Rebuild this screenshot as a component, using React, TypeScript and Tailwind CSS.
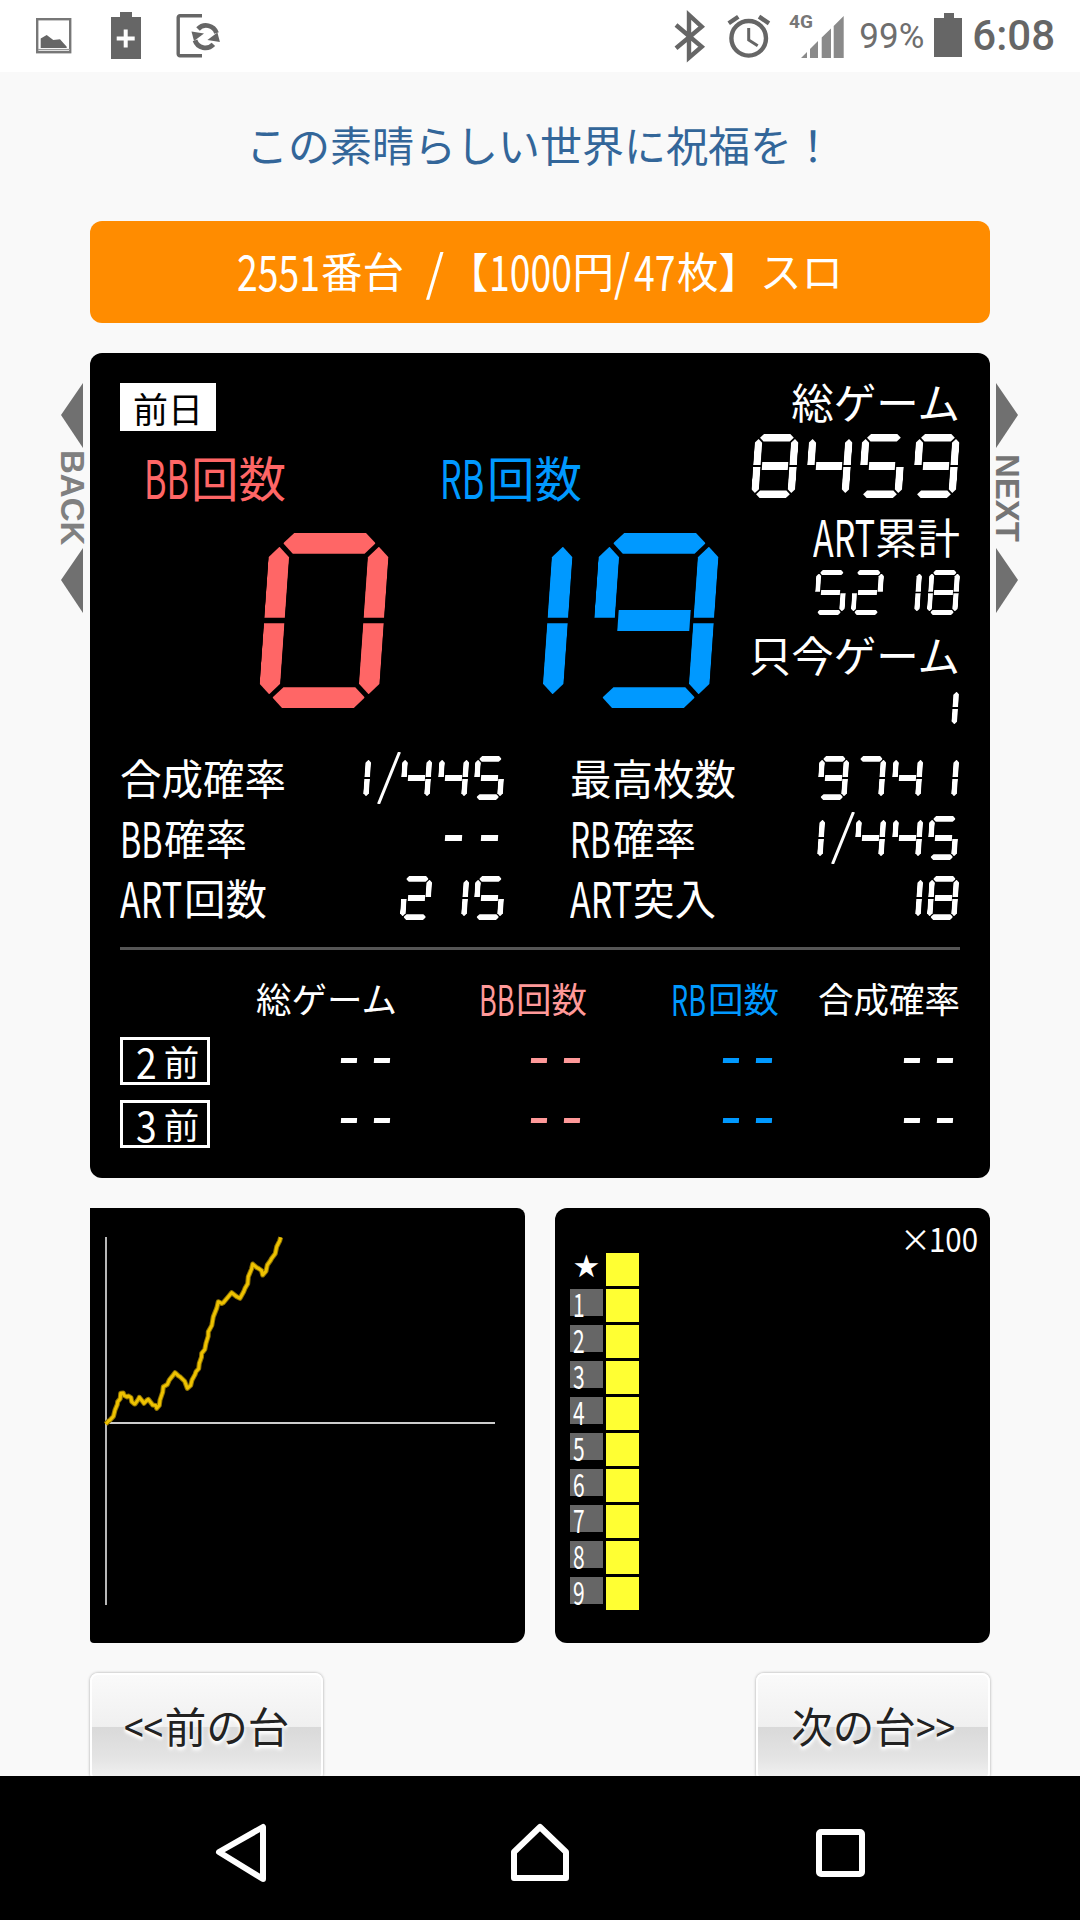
import React from "react";

const FONT = "font-['Noto_Sans_CJK_JP',sans-serif]";

const SEGS: Record<string, string> = {
  "0": "abcdef",
  "1": "bc",
  "2": "abged",
  "3": "abgcd",
  "4": "fgbc",
  "5": "afgcd",
  "6": "afgcde",
  "7": "abc",
  "8": "abcdefg",
  "9": "abcdfg",
  "-": "g",
};

/* Latin in the reference is a tall condensed face: squeeze the installed one. */
function N({ children, w, sx = 0.9, sy = 1.18 }: { children: React.ReactNode; w: number; sx?: number; sy?: number }) {
  return (
    <span className="inline-block" style={{ width: w }}>
      <span className="inline-block whitespace-pre leading-none origin-[0_50%]" style={{ transform: `scale(${sx},${sy})` }}>
        {children}
      </span>
    </span>
  );
}

function Digit({ ch, h, color, t: tt }: { ch: string; h: number; color: string; t?: number }) {
  const t = tt ?? h * 0.118;
  const w = h * 0.686;
  const g = h * 0.02;
  const c = t / 2;
  const a = (h - 3 * t) / 2;
  const on = SEGS[ch] ?? "";
  const hex = `polygon(${c}px 0, calc(100% - ${c}px) 0, 100% 50%, calc(100% - ${c}px) 100%, ${c}px 100%, 0 50%)`;
  const up = `polygon(50% 0, 100% ${c}px, 100% 100%, 0 100%, 0 ${c}px)`;
  const down = `polygon(0 0, 100% 0, 100% calc(100% - ${c}px), 50% 100%, 0 calc(100% - ${c}px))`;
  const seg = (k: string, style: React.CSSProperties) =>
    on.includes(k) ? <div key={k} style={{ backgroundColor: color, ...style }} /> : null;
  return (
    <div className="flex justify-end shrink-0" style={{ width: h * 0.836, height: h, paddingRight: h * 0.035 }}>
      <div
        className="grid -skew-x-[4deg]"
        style={{ width: w, height: h, gridTemplateColumns: `${t}px 1fr ${t}px`, gridTemplateRows: `${t}px ${a}px ${c}px ${c}px ${a}px ${t}px` }}
      >
        {seg("a", { gridColumn: "1/4", gridRow: "1", margin: `0 ${c + g}px`, clipPath: hex })}
        {seg("d", { gridColumn: "1/4", gridRow: "6", margin: `0 ${c + g}px`, clipPath: hex })}
        {seg("g", { gridColumn: "2", gridRow: "3/5", margin: `0 ${g}px` })}
        {seg("f", { gridColumn: "1", gridRow: "1/4", marginTop: c + g, marginBottom: g * 0.8, clipPath: up })}
        {seg("b", { gridColumn: "3", gridRow: "1/4", marginTop: c + g, marginBottom: g * 0.8, clipPath: up })}
        {seg("e", { gridColumn: "1", gridRow: "4/7", marginBottom: c + g, marginTop: g * 0.8, clipPath: down })}
        {seg("c", { gridColumn: "3", gridRow: "4/7", marginBottom: c + g, marginTop: g * 0.8, clipPath: down })}
      </div>
    </div>
  );
}

/* Segment read-out: lit segments are CSS shapes, the value stays as real text in the same box. */
function Seg({ value, h, color = "#ffffff", t }: { value: string; h: number; color?: string; t?: number }) {
  return (
    <div className="relative flex justify-end items-center">
      <span className="absolute inset-0 flex items-center justify-end leading-none text-transparent" style={{ fontSize: h * 0.55 }}>
        {value}
      </span>
      {value.split("").map((ch, i) =>
        ch === "/" ? (
          <svg key={i} width="24" height="52" viewBox="0 0 24 52" className="shrink-0 ml-[5px] mr-[-5px]" aria-hidden>
            <line x1="1.5" y1="52" x2="22.5" y2="0" stroke={color} strokeWidth="3" />
          </svg>
        ) : (
          <Digit key={i} ch={ch} h={h} color={color} t={t} />
        )
      )}
    </div>
  );
}

function StatRow({ label, value }: { label: React.ReactNode; value: string }) {
  return (
    <div className="flex items-center justify-between h-[60px] text-[41.5px] leading-none">
      <span>{label}</span>
      <Seg value={value} h={44} t={5.8} />
    </div>
  );
}

function Arrow({ dir }: { dir: "l" | "r" }) {
  return (
    <svg width="22" height="65" viewBox="0 0 22 65" aria-hidden>
      <polygon points={dir === "l" ? "22,0 0,32 22,65" : "0,0 22,32 0,65"} fill="#707070" />
    </svg>
  );
}

function Side({ dir, label }: { dir: "l" | "r"; label: string }) {
  return (
    <div className={`w-[90px] shrink-0 pt-[30px] flex flex-col items-center ${dir === "l" ? "pl-[60px] pr-[6px]" : "pl-[6px] pr-[62px]"}`}>
      <Arrow dir={dir} />
      <div className={`[writing-mode:vertical-rl] font-['Liberation_Sans',sans-serif] font-bold text-[33px] leading-[24px] h-[100px] flex items-center justify-center whitespace-nowrap ${dir === "l" ? "text-[#808080]" : "text-[#757575]"}`}>
        {label}
      </div>
      <Arrow dir={dir} />
    </div>
  );
}

const chartKeys: [number, number][] = [
  [77,672],[90,660],[105,630],[113,605],[122,580],[132,586],[145,588],[155,605],[165,612],[178,592],[192,610],[205,598],[218,615],[230,625],[240,600],[250,560],[268,540],[285,518],[300,530],[322,565],[336,540],[348,515],[358,490],[365,460],[378,430],[385,395],[400,350],[415,305],[430,308],[455,278],[480,295],[495,265],[505,230],[518,192],[535,205],[548,225],[562,195],[575,175],[590,140],[602,112],
];

/* The plotted line steps up and down every few pixels: add that fine jitter between the key points. */
const chartPoints: string = chartKeys
  .flatMap(([x, y], i) => {
    const p = chartKeys[i + 1];
    const a: [number, number] = [(x - 30) / 3, (y - 24) / 3];
    if (!p) return [a];
    const b: [number, number] = [(p[0] - 30) / 3, (p[1] - 24) / 3];
    return [a, [(a[0] + b[0]) / 2 + 1, (a[1] + b[1]) / 2 + (i % 2 ? 1.2 : -1.2)] as [number, number]];
  })
  .map(([x, y]) => `${x.toFixed(1)},${y.toFixed(1)}`)
  .join(" ");

function Btn({ w, children }: { w: string; children: React.ReactNode }) {
  return (
    <div className={`${w} h-[108px] rounded-[8px] border-2 border-white shadow-[0_0_3px_rgba(0,0,0,0.35)] bg-[linear-gradient(to_bottom,#fafafa_0%,#f0f0f0_49.5%,#d9d9d9_50%,#e4e4e4_80%,#f2f2f2_100%)] flex items-center justify-center pb-[2px] text-[41.5px] leading-none text-[#222222] [text-shadow:0_2px_3px_#ffffff,0_3px_4px_#ffffff]`}>
      {children}
    </div>
  );
}

function HistoryRow({ label, digit, mt, shift }: { label: string; digit: string; mt: string; shift: string }) {
  return (
    <div className={`grid grid-cols-[90px_187px_190px_192px_181px] items-center ${mt}`}>
      <div className="h-[48px] border-[3px] border-white flex items-center justify-center gap-[8px] pl-[5px] text-[35.5px] leading-none">
        <N w={20} sx={1.05} sy={1.2}>{digit}</N>
        <span>{label}</span>
      </div>
      <div className={shift}><Seg value="--" h={40} t={5} /></div>
      <div className={shift}><Seg value="--" h={40} t={5} color="#ff9999" /></div>
      <div className={shift}><Seg value="--" h={40} t={5} color="#0099ff" /></div>
      <div className={shift}><Seg value="--" h={40} t={5} /></div>
    </div>
  );
}

export default function App() {
  return (
    <div className={`w-[1080px] h-[1920px] flex flex-col overflow-hidden bg-[#f9f9f9] ${FONT}`}>
      {/* status bar */}
      <div className="h-[72px] shrink-0 bg-white flex items-center text-[#666666]">
        <svg width="240" height="72" viewBox="0 0 240 72" className="shrink-0" aria-hidden>
          <rect x="37.2" y="19.2" width="33" height="33" fill="none" stroke="#777777" strokeWidth="2.4" />
          <line x1="38" y1="49.6" x2="70" y2="49.6" stroke="#999999" strokeWidth="1.4" />
          <path d="M40.7 48 V38.5 L46.7 35 L53.3 40 L60 39.3 L66.7 46.7 V48 Z" fill="#666666" />
          <path d="M120 12 h12 v5 h9 v42 h-30 v-42 h9 z" fill="#666666" />
          <path d="M123.7 29.5 h4 v7 h7 v4 h-7 v7 h-4 v-7 h-7 v-4 h7 z" fill="#ffffff" />
          <path d="M202 15.7 H180 a1.8 1.8 0 0 0 -1.8 1.8 V54 a1.8 1.8 0 0 0 1.8 1.8 H202" fill="none" stroke="#666666" strokeWidth="3.4" />
          <rect x="190" y="22" width="32" height="29" fill="#ffffff" />
          <path d="M216.5 33 A11 11 0 0 0 198 29" fill="none" stroke="#666666" strokeWidth="4.8" />
          <polygon points="191.5,31.5 204,33.5 194,41" fill="#666666" />
          <path d="M195 40.4 A11 11 0 0 0 213.4 44.4" fill="none" stroke="#666666" strokeWidth="4.8" />
          <polygon points="219.9,41.9 207.4,39.9 217.4,32.4" fill="#666666" />
        </svg>
        <div className="flex-1" />
        <svg width="185" height="72" viewBox="660 0 185 72" className="shrink-0" aria-hidden>
          <path d="M675 25 L700.7 46.7 L688 57.7 V15 L700.7 26.7 L675 48.3" fill="none" stroke="#666666" strokeWidth="4.4" />
          <circle cx="747.7" cy="38.3" r="17.3" fill="none" stroke="#666666" strokeWidth="4.4" />
          <path d="M747.7 28 V40 L756.7 45.7" fill="none" stroke="#666666" strokeWidth="3" />
          <path d="M727.7 23.3 L737.3 16.7 M768 23.3 L758 16.7" stroke="#666666" strokeWidth="4.4" />
          <text x="788" y="28" fontSize="19" fontWeight="700" fill="#777777" fontFamily="Roboto">4G</text>
          <path d="M800 58 L806 52 V58 Z M809 58 V49 L817 41 V58 Z M820.7 58 V37.5 L830 28.5 V58 Z M832.7 58 V26 L842.7 16 V58 Z" fill="#8a8a8a" />
        </svg>
        <span className="font-['Roboto',sans-serif] text-[35px] leading-none ml-[13px] mr-[9px] text-[#6e6e6e]">99%</span>
        <svg width="30" height="72" viewBox="0 0 30 72" className="shrink-0" aria-hidden>
          <path d="M11 13 h10 v5 h8 v39 h-28 v-39 h10 z" fill="#666666" />
        </svg>
        <span className="font-['Roboto',sans-serif] font-medium text-[42px] leading-none ml-[9px] mr-[25px]">6:08</span>
      </div>

      {/* content */}
      <div className="flex-1 min-h-0 overflow-hidden flex flex-col">
        <div className="h-[149px] flex items-center justify-center text-[42px] leading-none text-[#336699] pb-[6px] shrink-0">
          この素晴らしい世界に祝福を！
        </div>
        <div className="mx-[90px] h-[102px] shrink-0 rounded-[12px] bg-[#ff8c00] flex items-center justify-center pb-[3px] text-white text-[41.5px] leading-none whitespace-pre">
          <N w={84}>2551</N>番台<N w={43} sx={1.15}>{"  / "}</N>【<N w={84}>1000</N>円<N w={20} sx={1}>/</N><N w={43}>47</N>枚】スロ
        </div>

        <div className="flex mt-[30px] shrink-0">
          <Side dir="l" label="BACK" />
          <div className="w-[900px] h-[825px] shrink-0 rounded-[12px] bg-black text-white px-[30px] pt-[30px]">
            <div className="flex justify-between h-[344px]">
              <div className="flex flex-col">
                <div className="w-[96px] h-[48px] bg-white text-black flex items-center justify-center text-[35px] leading-none">前日</div>
                <div className="grid grid-cols-[270px_330px] mt-[22px] text-[47.5px] leading-[48px] h-[56px]">
                  <span className="pl-[24px] text-[#ff6666]"><N w={47} sx={0.72} sy={1.12}>BB</N>回数</span>
                  <span className="pl-[50px] text-[#0099ff]"><N w={47} sx={0.72} sy={1.12}>RB</N>回数</span>
                </div>
                <div className="grid grid-cols-[270px_330px] mt-[24px]">
                  <Seg value="0" h={175} color="#ff6666" />
                  <Seg value="19" h={175} color="#0099ff" />
                </div>
              </div>
              <div className="flex flex-col items-end text-[42.5px] leading-[42px]">
                <span className="-mt-[3px] mb-[3px]">総ゲーム</span>
                <div className="mt-[9px]"><Seg value="8459" h={64} /></div>
                <span className="mt-[17px] mb-[3px]"><N w={62} sx={0.8}>ART</N>累計</span>
                <div className="mt-[9px]"><Seg value="5218" h={45} t={5.4} /></div>
                <span className="mt-[18px] mb-[3px]">只今ゲーム</span>
                <div className="mt-[10px]"><Seg value="1" h={40} t={6} /></div>
              </div>
            </div>
            <div className="grid grid-cols-[386px_390px] gap-x-[64px] mt-[21px]">
              <div>
                <StatRow label="合成確率" value="1/445" />
                <StatRow label={<><N w={44} sx={0.78}>BB</N>確率</>} value="--" />
                <StatRow label={<><N w={64} sx={0.82}>ART</N>回数</>} value="215" />
              </div>
              <div>
                <StatRow label="最高枚数" value="9741" />
                <StatRow label={<><N w={43} sx={0.76}>RB</N>確率</>} value="1/445" />
                <StatRow label={<><N w={63} sx={0.82}>ART</N>突入</>} value="18" />
              </div>
            </div>
            <div className="h-[3px] bg-[#555555] mt-[19px]" />
            <div className="grid grid-cols-[90px_187px_190px_192px_181px] items-center text-[35.5px] leading-none mt-[30px]">
              <span />
              <span className="text-right">総ゲーム</span>
              <span className="text-right text-[#ff9999]"><N w={37} sx={0.76}>BB</N>回数</span>
              <span className="text-right text-[#0099ff]"><N w={37} sx={0.76}>RB</N>回数</span>
              <span className="text-right">合成確率</span>
            </div>
            <HistoryRow digit="2" label="前" mt="mt-[21px]" shift="-translate-y-[1px]" />
            <HistoryRow digit="3" label="前" mt="mt-[15px]" shift="-translate-y-[4px]" />
          </div>
          <Side dir="r" label="NEXT" />
        </div>

        <div className="mx-[90px] mt-[30px] flex justify-between shrink-0">
          <div className="w-[435px] h-[435px] bg-black rounded-tr-[8px] rounded-br-[12px] rounded-bl-[4px]">
            <svg width="435" height="435" viewBox="0 0 435 435" aria-hidden>
              <line x1="16" y1="29" x2="16" y2="397" stroke="#cccccc" strokeWidth="1.8" />
              <line x1="16" y1="215" x2="405" y2="215" stroke="#cccccc" strokeWidth="2" />
              <polyline points={chartPoints} fill="none" stroke="#8f7300" strokeWidth="5" strokeLinejoin="round" />
              <polyline points={chartPoints} fill="none" stroke="#eec200" strokeWidth="3" strokeLinejoin="round" />
            </svg>
          </div>
          <div className="w-[435px] h-[435px] bg-black rounded-[12px] px-[15px] flex flex-col">
            <div className="flex justify-end text-white text-[31px] leading-none h-[45px] pt-[14px] mr-[1px]">
              <span className="mr-[-2px]">×</span><N w={45} sx={0.95} sy={1.1}>100</N>
            </div>
            <div className="flex flex-col gap-[3px]">
              {["★", "1", "2", "3", "4", "5", "6", "7", "8", "9"].map((l) => (
                <div key={l} className="flex gap-[3px]">
                  {l === "★" ? (
                    <div className="w-[33px] h-[33px] text-white text-[31px] leading-[27px] text-center font-['DejaVu_Sans',sans-serif]">★</div>
                  ) : (
                    <div className="w-[33px] h-[27px] bg-[#666666] text-white text-[28px] leading-[27px] pl-[3px]">
                      <N w={12} sx={0.75} sy={1.14}>{l}</N>
                    </div>
                  )}
                  <div className="w-[33px] h-[33px] bg-[#ffff33]" />
                </div>
              ))}
            </div>
          </div>
        </div>

        <div className="mx-[90px] mt-[30px] flex justify-between shrink-0">
          <Btn w="w-[233px]"><N w={41} sx={0.85} sy={1}>{"<<"}</N>前の台</Btn>
          <Btn w="w-[234px]">次の台<N w={39} sx={0.85} sy={1}>{">>"}</N></Btn>
        </div>
      </div>

      {/* nav bar */}
      <div className="h-[144px] shrink-0 bg-black">
        <svg width="1080" height="144" viewBox="0 0 1080 144" aria-hidden>
          <path d="M263 51 V103 L219 76 Z" fill="none" stroke="#ffffff" strokeWidth="6" strokeLinejoin="round" />
          <path d="M540 51 L566 76 V102 H514 V76 Z" fill="none" stroke="#ffffff" strokeWidth="6" strokeLinejoin="round" />
          <rect x="819" y="56" width="43" height="42" rx="2" fill="none" stroke="#ffffff" strokeWidth="6" />
        </svg>
      </div>
    </div>
  );
}
